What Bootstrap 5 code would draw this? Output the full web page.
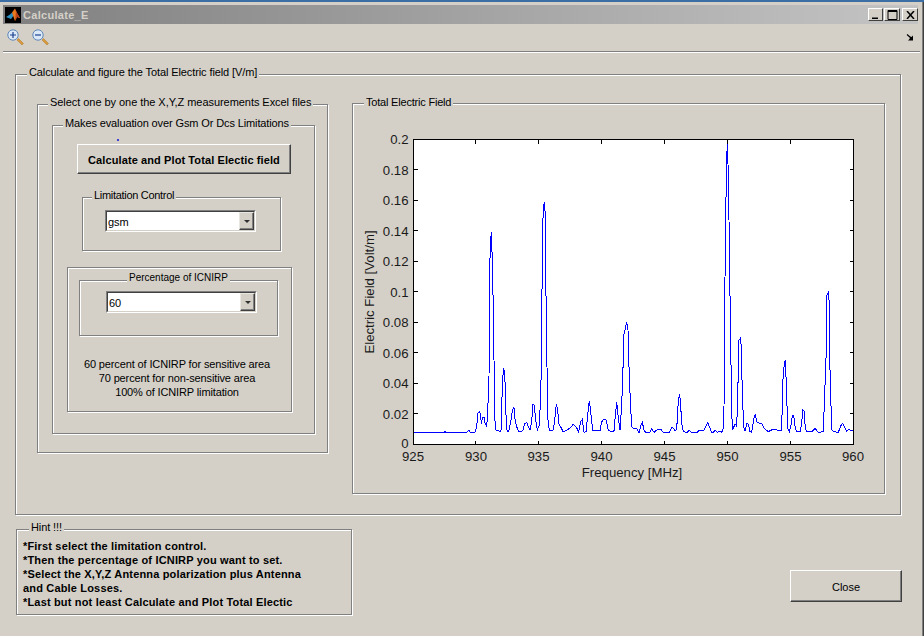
<!DOCTYPE html>
<html lang="en">
<head>
<meta charset="utf-8">
<title>Calculate_E</title>
<link href="https://cdn.jsdelivr.net/npm/bootstrap@5.3.0/dist/css/bootstrap.min.css" rel="stylesheet">
<style>
html,body{height:100%}
body{margin:0;width:924px;height:636px;overflow:hidden;background:#d4d0c8;color:#000;font-family:"Liberation Sans",Arial,sans-serif;font-size:11px;line-height:14px}
.desk-strip{height:2px;background:#3a6ea5}
.win-shell{height:634px;padding-top:3px;border-right:1px solid #404040;box-shadow:inset -1px 0 0 #808080}
.title-row{height:19px;margin:0 3px 0 3px;width:915px;background:linear-gradient(90deg,#808080,#c4c4c4);color:#d4d0c8;font-weight:700;font-size:11px;letter-spacing:.3px;padding-left:2px}
.app-logo{margin-right:2px}
.win-ctrl{width:16px;height:13px;background:#d4d0c8;border:1px solid;border-color:#fff #404040 #404040 #fff;padding:0;display:flex;align-items:center;justify-content:center;margin-left:2px}
.win-ctrl.ctrl-min{width:15px;margin-left:0}
.win-ctrl.ctrl-max{margin-left:1px}
.tool-row{height:28px;width:917px;margin-left:3px;border-bottom:1px solid #808080;box-shadow:0 1px 0 #fff;padding:0 6px 0 4px}
.tool-row svg{display:block;margin-top:-1px}
.zoom-out{margin-left:8px}
.work-area{padding:22px 0 0 15px}
.etched{position:relative;border:1px solid #808080;box-shadow:inset 1px 1px 0 #fff,1px 1px 0 #fff}
.legend-text{position:absolute;top:-10px;left:11px;padding:0 2px;background:#d4d0c8;white-space:nowrap;letter-spacing:-.1px}
.main-panel{width:886px;height:441px;padding:29px 0 0 21px}
.select-panel{width:291px;height:349px;padding:20px 0 0 14px;flex:none}
.select-panel>.legend-text{left:10px;letter-spacing:-.05px}
.makes-panel{width:263px;height:309px;padding:13px 0 0 24px}
.makes-panel>.legend-text{left:10px;letter-spacing:-.12px}
.blue-dot{display:block;width:2px;height:2px;background:#4040d0;margin-left:40px}
.calc-btn{display:block;width:214px;height:30px;margin-top:3px;padding:1px 0 0;border:1px solid;border-color:#fff #404040 #404040 #fff;border-radius:0;background:#d4d0c8;color:#000;font:700 11px/14px "Liberation Sans",Arial,sans-serif;letter-spacing:.1px;box-shadow:inset -1px -1px 0 #808080}
.limit-panel{width:199px;height:54px;margin:23px 0 0 5px;padding:12px 0 0 22px}
.limit-panel>.legend-text{left:9px;letter-spacing:-.3px}
.pct-outer{width:225px;height:145px;margin:16px 0 0 -10px;padding:12px 0 0 11px}
.pct-inner{width:199px;height:56px;padding:10px 0 0 26px}
.pct-inner>.legend-text{left:47px;font-size:10px;letter-spacing:0}
.note-text{margin:21px 0 0 0;width:196px;text-align:center;letter-spacing:-.13px;padding:0}
.drop-box{width:151px;height:22px;border:1px solid;border-color:#808080 #fff #fff #808080;background:#fff}
.drop-inner{height:100%;border:1px solid;border-color:#404040 #d4d0c8 #d4d0c8 #404040;padding-left:1px;background:#fff;font-size:11px}
.drop-inner>span:first-child{padding-top:2px}
.drop-arrow{width:15px;height:18px;margin-left:auto;background:#d4d0c8;border:1px solid;border-color:#e8e6e0 #404040 #404040 #e8e6e0;display:flex;align-items:center;justify-content:center;box-shadow:inset -1px -1px 0 #808080}
.drop-arrow i{display:block;width:0;height:0;border-left:3px solid transparent;border-right:3px solid transparent;border-top:3px solid #303030}
.plot-panel{width:533px;height:391px;margin:-1px 0 0 24px;flex:none}
.plot-panel>.legend-text{top:-9px;letter-spacing:-.2px}
.plot-svg{display:block}
.plot-svg text{font-family:"Liberation Sans",Arial,sans-serif;font-size:13.2px;fill:#1a1a1a}
.axis-line{fill:none;stroke:#000;stroke-width:1;shape-rendering:crispEdges}
.trace-line{fill:none;stroke:#0000ff;stroke-width:1;shape-rendering:crispEdges;stroke-linejoin:miter}
.lower-row{margin-top:14px}
.hint-panel{width:336px;height:86px;margin-left:1px;padding:9px 0 0 6px;font-weight:700;flex:none;letter-spacing:.17px}
.hint-panel>.legend-text{left:12px;font-weight:400;letter-spacing:-.1px}
.close-btn{display:block;width:112px;height:32px;margin:41px 0 0 438px;padding:1px 0 0;border:1px solid;border-color:#fff #404040 #404040 #fff;border-radius:0;background:#d4d0c8;color:#000;font:400 11px/14px "Liberation Sans",Arial,sans-serif;box-shadow:inset -1px -1px 0 #808080}
</style>
</head>
<body>
<div class="desk-strip"></div>
<div class="win-shell">
  <div class="title-row d-flex align-items-center">
    <svg class="app-logo" width="16" height="16" viewBox="0 0 16 16"><rect width="16" height="16" fill="#000"/><path d="M1 10 5 7.5 7 5.5 9 8 6 12Z" fill="#2f8fc0"/><path d="M7 5.5 10 1.5 12 6 15 11 12 10 10 14 8 8.5Z" fill="#e8791e"/><path d="M10 1.500 11 5 10 14 12 10 15 11 12 6Z" fill="#b8401a"/></svg>
    <span>Calculate_E</span>
    <div class="ms-auto d-flex">
      <button class="win-ctrl ctrl-min" aria-label="Minimize"><svg width="9" height="9" viewBox="0 0 9 9"><path d="M1 7.500h6v1.500H1z" fill="#000"/></svg></button>
      <button class="win-ctrl ctrl-max" aria-label="Maximize"><svg width="11" height="10" viewBox="0 0 11 10"><path d="M1 .5h9v9H1z M1 1.500h9" fill="none" stroke="#000"/></svg></button>
      <button class="win-ctrl" aria-label="Close window"><svg width="9" height="8" viewBox="0 0 9 8"><path d="M1 0 8 8M8 0 1 8" stroke="#000" stroke-width="1.500" fill="none"/></svg></button>
    </div>
  </div>
  <div class="tool-row d-flex align-items-center">
    <svg width="17" height="17" viewBox="0 0 17 17"><path d="M10 11l1.500-1.500 5 5-1.500 1.500z" fill="#d99a3c" stroke="#a87428" stroke-width=".5"/><circle cx="6" cy="6" r="5.200" fill="#dbe8f7" stroke="#5f86b8"/><path d="M3 6h6M6 3v6" stroke="#1a3e8c" stroke-width="1.200"/></svg>
    <svg class="zoom-out" width="17" height="17" viewBox="0 0 17 17"><path d="M10 11l1.500-1.500 5 5-1.500 1.500z" fill="#d99a3c" stroke="#a87428" stroke-width=".5"/><circle cx="6" cy="6" r="5.200" fill="#dbe8f7" stroke="#5f86b8"/><path d="M3 6h6" stroke="#1a3e8c" stroke-width="1.200"/></svg>
    <svg class="ms-auto" width="8" height="7" viewBox="0 0 8 7"><path d="M1 .5 5 4" stroke="#000" stroke-width="1.200" fill="none"/><path d="M7 1.500V6.500H2L3.500 5 4.500 2.500 5.500 3Z" fill="#000"/></svg>
  </div>
  <div class="work-area">
    <div class="etched main-panel d-flex align-items-start">
      <span class="legend-text">Calculate and figure the Total Electric field [V/m]</span>
      <div class="etched select-panel">
        <span class="legend-text">Select one by one the X,Y,Z measurements Excel files</span>
        <div class="etched makes-panel">
          <span class="legend-text">Makes evaluation over Gsm Or Dcs Limitations</span>
          <span class="blue-dot"></span>
          <button class="btn calc-btn">Calculate and Plot Total Electic field</button>
          <div class="etched limit-panel">
            <span class="legend-text">Limitation Control</span>
            <div class="drop-box"><div class="drop-inner d-flex align-items-center"><span>gsm</span><span class="drop-arrow"><i></i></span></div></div>
          </div>
          <div class="etched pct-outer">
            <div class="etched pct-inner">
              <span class="legend-text">Percentage of ICNIRP</span>
              <div class="drop-box"><div class="drop-inner d-flex align-items-center"><span>60</span><span class="drop-arrow"><i></i></span></div></div>
            </div>
            <p class="note-text">60 percent of ICNIRP for sensitive area<br>70 percent for non-sensitive area<br>100% of ICNIRP limitation</p>
          </div>
        </div>
      </div>
      <div class="etched plot-panel">
        <span class="legend-text">Total Electric Field</span>
        <svg class="plot-svg" width="531" height="389" viewBox="353 104 531 389">
          <rect x="413.500" y="139.500" width="440" height="305" fill="#fff"/>
          <polyline class="trace-line" points="413.500,432 416,432.700 444,432.700 445,431.700 446,432.700 466.700,432.700 468.700,430.300 470.700,432.700 475,432.500 476.700,426 478,413 479.300,411.500 480.700,415 481.300,424 482.700,417 484,417 485,423 486.700,427 487.700,411 489,378 489.500,281 490.300,245 491.300,232 492.300,261 493.300,308 494,360 495,421 496,430 500,431.500 501,430 501.700,404 503.300,369 504.300,370.700 505.300,386.700 506.300,426.700 507.300,431 508.700,431 510.700,421.700 512.300,410.700 514,407.300 515.300,421.700 516.700,426.700 518.300,431 520,432 522.700,430.700 524.700,424 526.700,422.300 528.300,426.700 530,430 531.700,421.700 533,404 534.300,405 535.700,420 537.300,430 539.300,425 540.700,395 541.700,349 542.300,239 543.300,210 544.300,202.300 545.300,214 545.700,280 546.300,310.700 547,367 548,420 549.300,430 551.300,431 553.300,430 554.700,420 556.300,404 557.700,410.700 559,424 561.300,428 563.300,432 566.700,430 570,428.300 573.300,424.300 576.700,428 578.700,432 580.700,421.700 582.300,419.300 584,432.300 586,431.700 588,411.700 589.300,400.700 590.700,411.700 592.700,430.700 600,431 601.700,421.700 604,419 606,420 608.300,430 611.700,432 614,430.700 615.700,411.700 616.700,402.300 618,415 620,430 621.700,405 622.700,378.300 624,334 625.300,328.300 626.700,321.700 628,330 629.300,376.700 630.300,400 631.700,426.700 633.300,428.300 636.700,428.300 639,432.700 641,425 642.300,422.300 644,430 645.700,432.300 650,432.300 651.700,429 654,432.300 658.300,429 660.700,429.300 663.300,432.300 669.300,432.300 671.700,427.300 673.300,428.300 675,430.700 676.700,429.300 678,405.700 679.300,394 680.300,399 681.700,423.300 683.300,431 686.700,432.700 689.300,430.300 691.700,432.700 696.700,432.700 699.300,430.300 704,430.300 706,426 707.700,422.300 710,428.300 711.700,432.300 713.300,432.300 715.300,430.300 717.300,432.300 719.300,431 721.700,432.300 723,429.300 724,407.300 725.300,240 726.300,179 727.300,140 728,164 729,220 730,295.700 730.700,320 731.300,406.700 732.700,430 735,424 736.700,426 737.700,396.700 739,340 740.300,338.300 741.300,346.700 742.300,393.300 743.700,426.700 745,431 747,423.300 748.300,424 750,431.700 751.700,432.300 754,418.300 755.300,414.300 756.700,421.700 759.300,423.300 761.700,423.700 764.300,428.300 768.300,431.700 772.700,429.300 778.300,430.300 781.700,430.300 782.700,383.300 784,366.700 785.300,360 786.300,383.300 787.700,428.300 789.300,431.700 790.700,426.700 792.300,415.700 793.700,415.700 795.300,428.300 796.700,431.700 800,431.700 801.700,423.300 802.700,410 804,410.700 805.300,428.300 806.700,431.700 811.700,431.700 815,428.300 818.300,432.300 823.300,431.700 825.300,376.700 826.700,340 827,295 828.300,292.300 829.300,303.300 830,370 831.700,430 834,431.700 838.300,432.300 840.700,426 842.700,423.300 846.700,431 849.300,429.300 851.700,431 853.300,430"/>
          <path class="axis-line" d="M413.500 139.500H853.500V444.500H413.500Z
            M475.500 139.500v4M538.500 139.500v4M601.500 139.500v4M664.500 139.500v4M727.500 139.500v4M790.500 139.500v4
            M475.500 444.500v-4M538.500 444.500v-4M601.500 444.500v-4M664.500 444.500v-4M727.500 444.500v-4M790.500 444.500v-4
            M413.500 413.500h4M413.500 383.500h4M413.500 352.500h4M413.500 322.500h4M413.500 291.500h4M413.500 261.500h4M413.500 230.500h4M413.500 200.500h4M413.500 169.500h4
            M853.500 413.500h-4M853.500 383.500h-4M853.500 352.500h-4M853.500 322.500h-4M853.500 291.500h-4M853.500 261.500h-4M853.500 230.500h-4M853.500 200.500h-4M853.500 169.500h-4"/>
          <g text-anchor="end">
            <text x="408.500" y="144">0.2</text><text x="408.500" y="174.500">0.18</text><text x="408.500" y="205">0.16</text><text x="408.500" y="235.500">0.14</text><text x="408.500" y="266">0.12</text><text x="408.500" y="296.500">0.1</text><text x="408.500" y="327">0.08</text><text x="408.500" y="357.500">0.06</text><text x="408.500" y="388">0.04</text><text x="408.500" y="418.500">0.02</text><text x="408.500" y="448">0</text>
          </g>
          <g text-anchor="middle">
            <text x="413" y="460.500">925</text><text x="476" y="460.500">930</text><text x="538.500" y="460.500">935</text><text x="601.500" y="460.500">940</text><text x="664.500" y="460.500">945</text><text x="727.500" y="460.500">950</text><text x="790.500" y="460.500">955</text><text x="853" y="460.500">960</text>
            <text x="632" y="477">Frequency [MHz]</text>
            <text transform="translate(373.500 292) rotate(-90)">Electric Field [Volt/m]</text>
          </g>
        </svg>
      </div>
    </div>
    <div class="lower-row d-flex align-items-start">
      <div class="etched hint-panel">
        <span class="legend-text">Hint !!!</span>
        *First select the limitation control.<br>*Then the percentage of ICNIRP you want to set.<br>*Select the X,Y,Z Antenna polarization plus Antenna<br>and Cable Losses.<br>*Last but not least Calculate and Plot Total Electic
      </div>
      <button class="btn close-btn">Close</button>
    </div>
  </div>
</div>
<script src="https://cdn.jsdelivr.net/npm/bootstrap@5.3.0/dist/js/bootstrap.bundle.min.js"></script>
</body>
</html>
